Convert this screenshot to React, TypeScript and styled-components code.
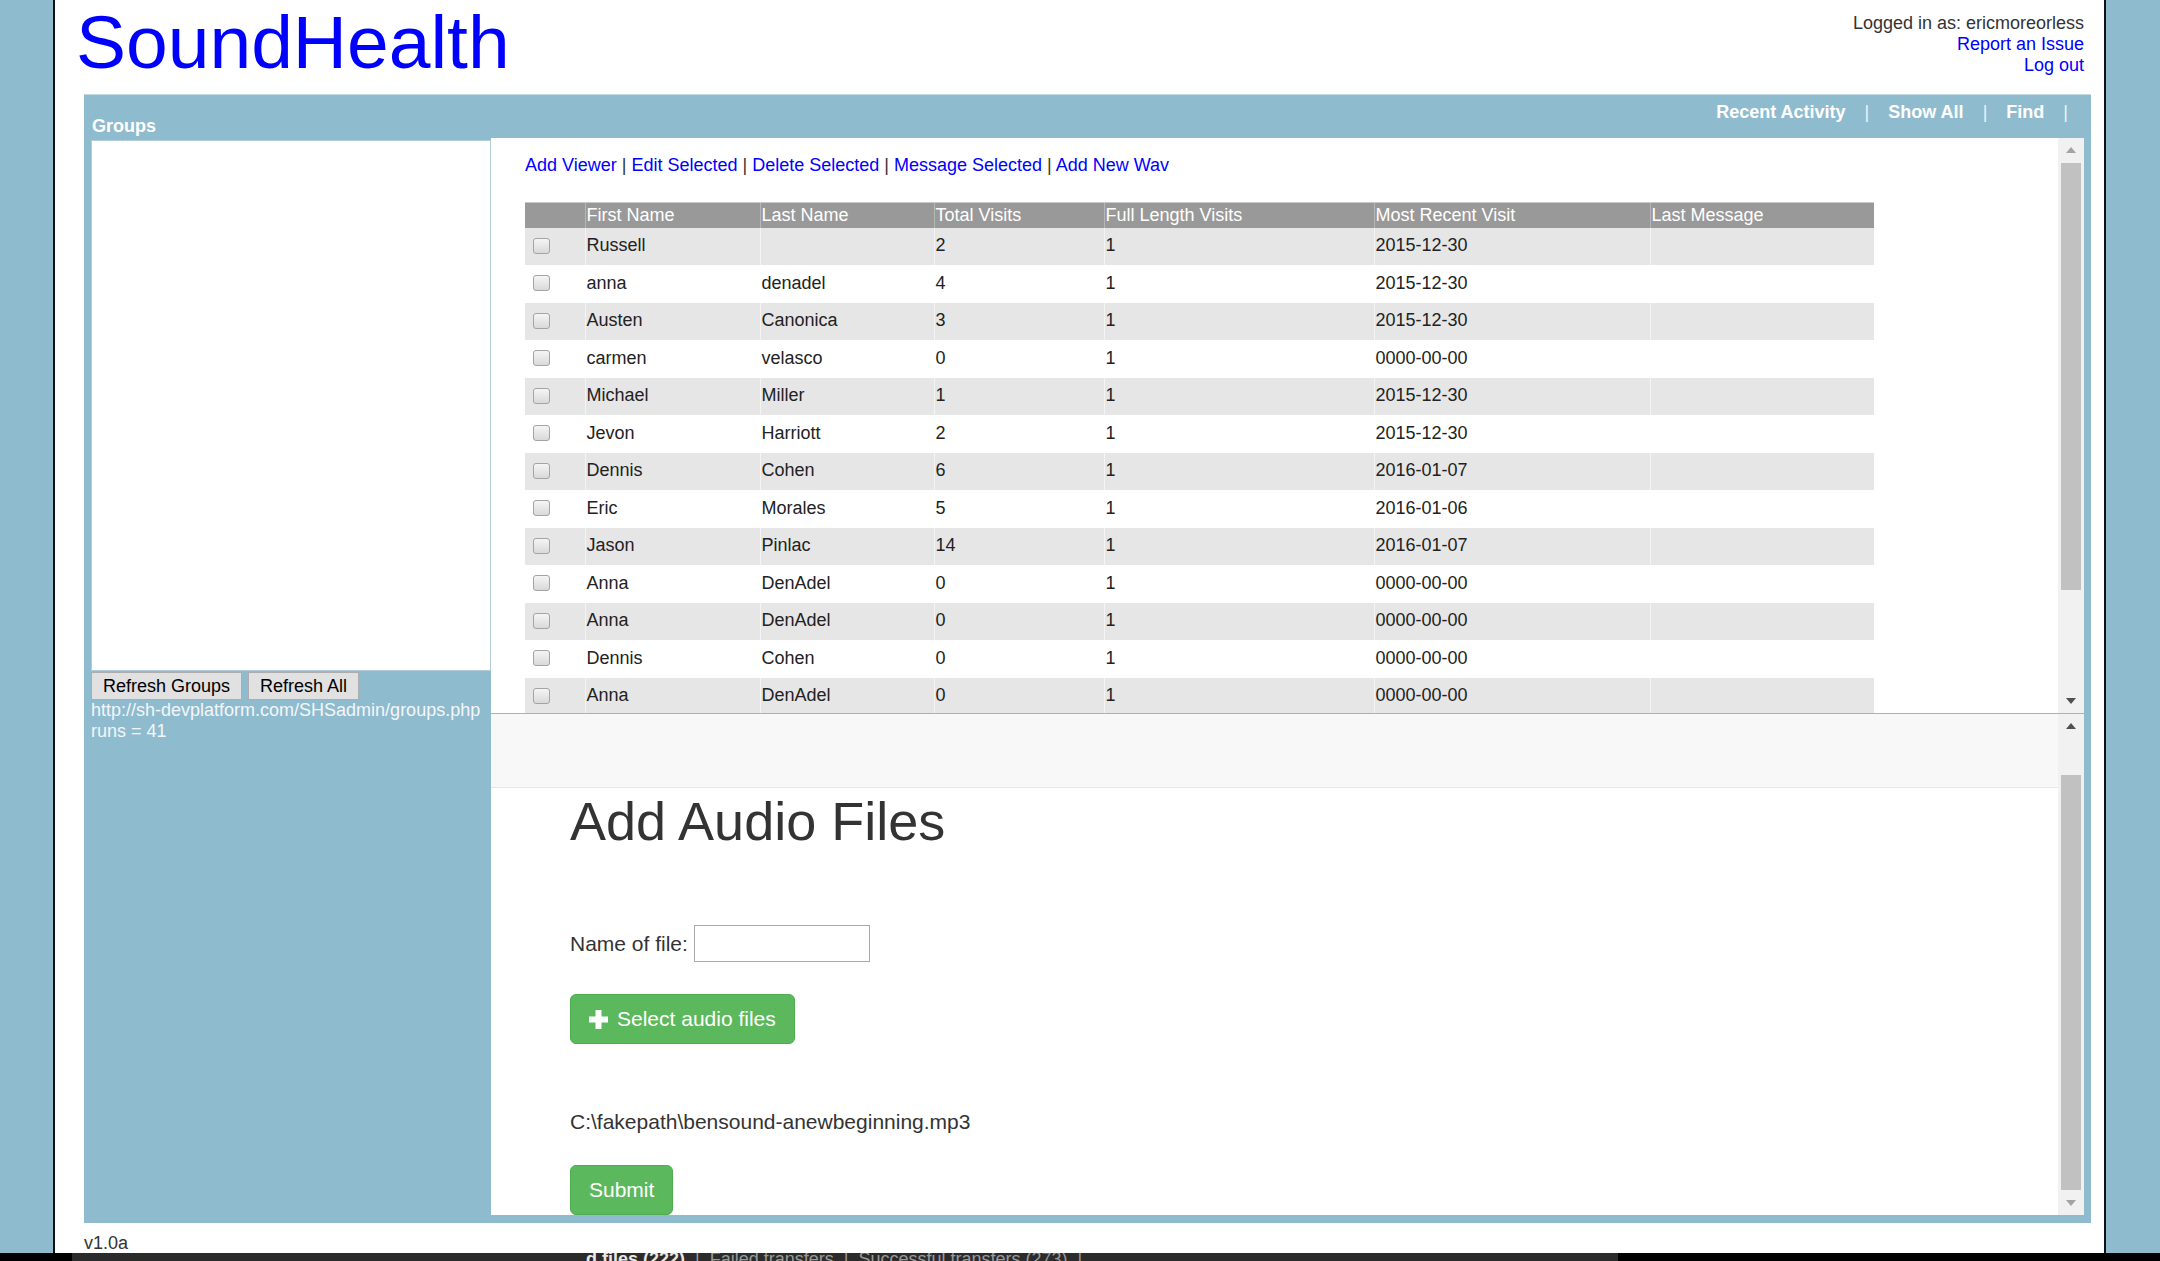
import React from "react";
import styled, { createGlobalStyle } from "styled-components";

const GlobalStyle = createGlobalStyle`
  *, *::before, *::after { box-sizing: border-box; }
  html, body { margin: 0; padding: 0; }
  body {
    background: #8fbbcf;
    font-family: "Liberation Sans", Arial, Helvetica, sans-serif;
    font-size: 18px;
    color: #333;
  }
`;

const Screen = styled.div`
  height: 100vh;
  display: flex;
  flex-direction: column;
  overflow: hidden;
`;

const Page = styled.div`
  flex: 1;
  min-height: 0;
  width: 2053px;
  margin-left: 53px;
  border-left: 2px solid #111;
  border-right: 2px solid #111;
  background: #fff;
  padding: 0 13px 0 21px;
  display: flex;
  flex-direction: column;
`;

const Header = styled.header`
  height: 94px;
  flex: none;
  display: flex;
  justify-content: space-between;
  align-items: flex-start;
`;

const Logo = styled.a`
  margin-top: 5px;
  font-size: 75px;
  line-height: 75px;
  color: #0000ff;
  text-decoration: none;
`;

const Account = styled.div`
  margin: 13px 7px 0 0;
  display: flex;
  flex-direction: column;
  align-items: flex-end;
  line-height: 21px;
  color: #333;
`;

const Link = styled.a`
  color: #0000ff;
  text-decoration: none;
  cursor: pointer;
`;

const Panel = styled.div`
  height: 1129px;
  flex: none;
  margin-left: 8px;
  background: #8fbbcf;
  border-top: 1px solid #c3dae4;
  padding: 0 7px 7px;
  display: flex;
`;

const Sidebar = styled.aside`
  width: 400px;
  flex: none;
  display: flex;
  flex-direction: column;
`;

const SidebarTitle = styled.div`
  height: 45px;
  padding: 21px 0 0 1px;
  line-height: 21px;
  font-weight: bold;
  color: #fff;
`;

const GroupsBox = styled.div`
  height: 531px;
  background: #fff;
  border: 1px solid #b2cedb;
`;

const ButtonRow = styled.div`
  margin-top: 1px;
  display: flex;
  gap: 6px;
`;

const GrayButton = styled.button`
  height: 28px;
  padding: 0 11px;
  font-family: inherit;
  font-size: 18px;
  color: #000;
  background: #e1e1e1;
  border: 1px solid #adadad;
  border-radius: 0;
`;

const ServerInfo = styled.div`
  line-height: 21px;
  color: #f3f6f8;
`;

const Main = styled.main`
  flex: 1;
  min-width: 0;
  display: flex;
  flex-direction: column;
`;

const NavRow = styled.nav`
  height: 43px;
  padding: 7px 16px 0 0;
  display: flex;
  justify-content: flex-end;
  gap: 19px;
  line-height: 21px;
  font-weight: bold;
  color: #fff;
`;

const NavPipe = styled.span`
  font-weight: normal;
  color: #eef4f7;
`;

const Frame = styled.section<{ $height: number; $divider?: boolean }>`
  height: ${(p) => p.$height}px;
  flex: none;
  display: flex;
  background: #fff;
  border-bottom: ${(p) => (p.$divider ? "1px solid #8fbbcf" : "none")};
`;

const FrameBody = styled.div`
  flex: 1;
  min-width: 0;
  overflow: hidden;
  padding: 17px 0 0 34px;
`;

const ActionLinks = styled.div`
  line-height: 21px;
  color: #333;
`;

const Table = styled.table`
  margin-top: 26px;
  width: 1349px;
  table-layout: fixed;
  border-collapse: collapse;
`;

const HeadCell = styled.th<{ $first?: boolean }>`
  height: 25px;
  padding: 0 1px;
  background: #999;
  color: #fff;
  font-weight: normal;
  text-align: left;
  border-left: ${(p) => (p.$first ? "none" : "1px solid rgba(255,255,255,0.3)")};
  border-top: 1px solid #c9c9c9;
`;

const Row = styled.tr<{ $alt: boolean }>`
  height: 37.5px;
  background: ${(p) => (p.$alt ? "#e6e6e6" : "#fff")};
`;

const Cell = styled.td<{ $first?: boolean }>`
  padding: 0 1px 1px;
  color: #222;
  white-space: nowrap;
  border-left: ${(p) => (p.$first ? "none" : "1px solid rgba(255,255,255,0.55)")};
`;

const Check = styled.input`
  appearance: none;
  display: block;
  margin: 0 0 0 7px;
  width: 17px;
  height: 16px;
  border: 1px solid #a4a4a4;
  border-radius: 3px;
  background: linear-gradient(#f5f5f5, #d9d9d9);
`;

const Scrollbar = styled.div`
  width: 26px;
  flex: none;
  background: #f1f1f1;
  display: flex;
  flex-direction: column;
`;

const ScrollArrow = styled.div<{ $h: number }>`
  height: ${(p) => p.$h}px;
  flex: none;
  display: flex;
  align-items: center;
  justify-content: center;
`;

const ScrollTrack = styled.div`
  flex: 1;
  padding: 0 3px;
`;

const Thumb = styled.div<{ $top: number; $size: number }>`
  margin-top: ${(p) => p.$top}px;
  height: ${(p) => p.$size}px;
  background: #c1c1c1;
`;

const UploadBody = styled.div`
  flex: 1;
  min-width: 0;
  overflow: hidden;
  display: flex;
  flex-direction: column;
  font-size: 21px;
  color: #333;
`;

const NavBand = styled.div`
  height: 74px;
  flex: none;
  background: #f8f8f8;
  border-bottom: 1px solid #e7e7e7;
`;

const UploadForm = styled.form`
  padding-left: 79px;
  display: flex;
  flex-direction: column;
  align-items: flex-start;
`;

const Heading = styled.h1`
  margin: 4px 0 0;
  font-size: 54px;
  line-height: 59.4px;
  font-weight: normal;
  color: #333;
`;

const FieldRow = styled.label`
  margin-top: 74px;
  display: flex;
  align-items: center;
  line-height: 30px;
`;

const TextInput = styled.input`
  margin-left: 6px;
  width: 176px;
  height: 37px;
  border: 1px solid #a9a9a9;
  font-size: 21px;
`;

const SuccessButton = styled.button<{ $gap: number }>`
  margin-top: ${(p) => p.$gap}px;
  height: 50px;
  padding: 0 18px;
  display: inline-flex;
  align-items: center;
  gap: 9px;
  font-family: inherit;
  font-size: 21px;
  color: #fff;
  background: #5cb85c;
  border: 1px solid #4cae4c;
  border-radius: 6px;
`;

const FilePath = styled.div`
  margin-top: 63px;
  line-height: 30px;
`;

const Footer = styled.footer`
  height: 30px;
  flex: none;
  padding: 10px 0 0 8px;
  line-height: 21px;
  color: #333;
`;

const TaskStrip = styled.div`
  height: 8px;
  flex: none;
  display: flex;
  background: #000;
  overflow: hidden;
`;

const StripFill = styled.div`
  margin-left: 72px;
  width: 1546px;
  background: #2b2b2b;
  overflow: hidden;
`;

const StripText = styled.div`
  margin: -4px 0 0 514px;
  font-size: 18px;
  line-height: 20px;
  color: #9a9a9a;
  white-space: nowrap;
  b { color: #e8e8e8; }
`;

function Arrow({ up, dim }: { up?: boolean; dim?: boolean }) {
  return (
    <svg width="10" height="6" viewBox="0 0 10 6">
      <polygon
        points={up ? "0,6 5,0 10,6" : "0,0 10,0 5,6"}
        fill={dim ? "#a3a3a3" : "#505050"}
      />
    </svg>
  );
}

function PlusIcon() {
  return (
    <svg width="19" height="19" viewBox="0 0 19 19">
      <rect x="6.5" y="0" width="6" height="19" fill="#fff" />
      <rect x="0" y="6.5" width="19" height="6" fill="#fff" />
    </svg>
  );
}

const viewers = [
  ["Russell", "", "2", "1", "2015-12-30"],
  ["anna", "denadel", "4", "1", "2015-12-30"],
  ["Austen", "Canonica", "3", "1", "2015-12-30"],
  ["carmen", "velasco", "0", "1", "0000-00-00"],
  ["Michael", "Miller", "1", "1", "2015-12-30"],
  ["Jevon", "Harriott", "2", "1", "2015-12-30"],
  ["Dennis", "Cohen", "6", "1", "2016-01-07"],
  ["Eric", "Morales", "5", "1", "2016-01-06"],
  ["Jason", "Pinlac", "14", "1", "2016-01-07"],
  ["Anna", "DenAdel", "0", "1", "0000-00-00"],
  ["Anna", "DenAdel", "0", "1", "0000-00-00"],
  ["Dennis", "Cohen", "0", "1", "0000-00-00"],
  ["Anna", "DenAdel", "0", "1", "0000-00-00"],
];

const columns = [60, 175, 174, 170, 270, 276, 224];
const headings = ["First Name", "Last Name", "Total Visits", "Full Length Visits", "Most Recent Visit", "Last Message"];
const actions = ["Add Viewer", "Edit Selected", "Delete Selected", "Message Selected", "Add New Wav"];

export default function App() {
  return (
    <Screen>
      <GlobalStyle />
      <Page>
        <Header>
          <Logo>SoundHealth</Logo>
          <Account>
            <span>Logged in as: ericmoreorless</span>
            <Link>Report an Issue</Link>
            <Link>Log out</Link>
          </Account>
        </Header>

        <Panel>
          <Sidebar>
            <SidebarTitle>Groups</SidebarTitle>
            <GroupsBox />
            <ButtonRow>
              <GrayButton>Refresh Groups</GrayButton>
              <GrayButton>Refresh All</GrayButton>
            </ButtonRow>
            <ServerInfo>
              http://sh-devplatform.com/SHSadmin/groups.php
              <br />
              runs = 41
            </ServerInfo>
          </Sidebar>

          <Main>
            <NavRow>
              <span>Recent Activity</span>
              <NavPipe>|</NavPipe>
              <span>Show All</span>
              <NavPipe>|</NavPipe>
              <span>Find</span>
              <NavPipe>|</NavPipe>
            </NavRow>

            <Frame $height={576} $divider>
              <FrameBody>
                <ActionLinks>
                  {actions.map((a, i) => (
                    <React.Fragment key={a}>
                      {i > 0 && " | "}
                      <Link>{a}</Link>
                    </React.Fragment>
                  ))}
                </ActionLinks>
                <Table>
                  <colgroup>
                    {columns.map((w, i) => (
                      <col key={i} style={{ width: w }} />
                    ))}
                  </colgroup>
                  <thead>
                    <tr>
                      <HeadCell $first />
                      {headings.map((h) => (
                        <HeadCell key={h}>{h}</HeadCell>
                      ))}
                    </tr>
                  </thead>
                  <tbody>
                    {viewers.map((v, i) => (
                      <Row key={i} $alt={i % 2 === 0}>
                        <Cell $first>
                          <Check type="checkbox" />
                        </Cell>
                        {v.map((c, j) => (
                          <Cell key={j}>{c}</Cell>
                        ))}
                        <Cell />
                      </Row>
                    ))}
                  </tbody>
                </Table>
              </FrameBody>
              <Scrollbar>
                <ScrollArrow $h={24}>
                  <Arrow up dim />
                </ScrollArrow>
                <ScrollTrack>
                  <Thumb $top={1} $size={427} />
                </ScrollTrack>
                <ScrollArrow $h={24}>
                  <Arrow />
                </ScrollArrow>
              </Scrollbar>
            </Frame>

            <Frame $height={501}>
              <UploadBody>
                <NavBand />
                <UploadForm>
                  <Heading>Add Audio Files</Heading>
                  <FieldRow>
                    Name of file:
                    <TextInput type="text" />
                  </FieldRow>
                  <SuccessButton type="button" $gap={32}>
                    <PlusIcon />
                    Select audio files
                  </SuccessButton>
                  <FilePath>C:\fakepath\bensound-anewbeginning.mp3</FilePath>
                  <SuccessButton type="button" $gap={28}>
                    Submit
                  </SuccessButton>
                </UploadForm>
              </UploadBody>
              <Scrollbar>
                <ScrollArrow $h={24}>
                  <Arrow up />
                </ScrollArrow>
                <ScrollTrack>
                  <Thumb $top={37} $size={415} />
                </ScrollTrack>
                <ScrollArrow $h={25}>
                  <Arrow dim />
                </ScrollArrow>
              </Scrollbar>
            </Frame>
          </Main>
        </Panel>

        <Footer>v1.0a</Footer>
      </Page>
      <TaskStrip>
        <StripFill>
          <StripText>
            <b>d files (222)</b> &nbsp;|&nbsp; Failed transfers &nbsp;|&nbsp; Successful transfers (273) &nbsp;|
          </StripText>
        </StripFill>
      </TaskStrip>
    </Screen>
  );
}
